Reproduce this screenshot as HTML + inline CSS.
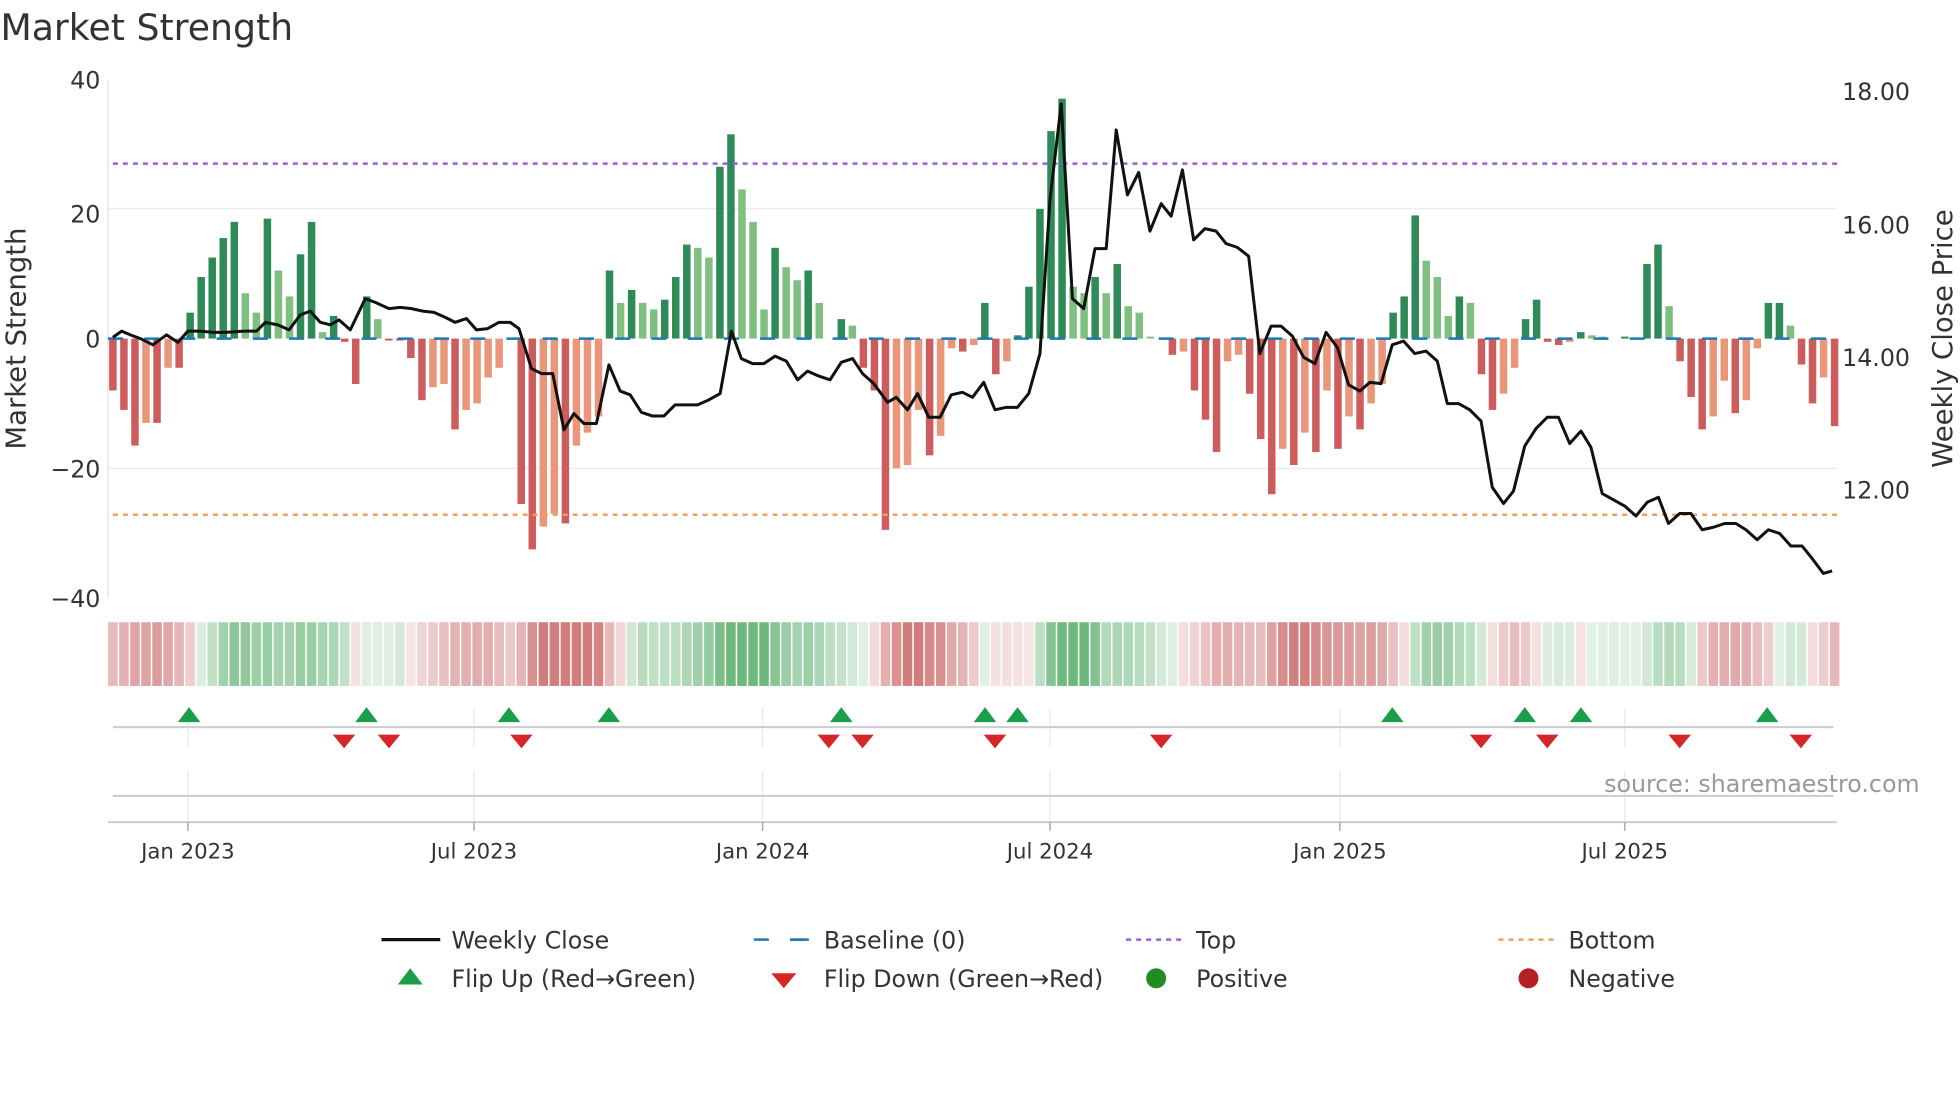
<!DOCTYPE html>
<html><head><meta charset="utf-8"><style>
html,body{margin:0;padding:0;background:#fff;}
svg{display:block;font-family:"DejaVu Sans","Liberation Sans",sans-serif;}
</style></head><body>
<svg id="s" width="1960" height="1102" viewBox="0 0 1568 882" xmlns="http://www.w3.org/2000/svg">
<rect width="1568" height="882" fill="#fff"/>
<text x="0" y="32" font-size="29" fill="#333">Market Strength</text>
<line x1="86" y1="167" x2="1470" y2="167" stroke="#ececec" stroke-width="1.2"/>
<line x1="86" y1="375" x2="1470" y2="375" stroke="#ececec" stroke-width="1.2"/>
<line x1="86" y1="64" x2="86" y2="479" stroke="#e6e6e6" stroke-width="1.2"/>
<g id="bars"></g>
<line x1="86" y1="271" x2="1470" y2="271" stroke="#1f77b4" stroke-width="2" stroke-dasharray="12 17"/>
<line x1="90" y1="131" x2="1470" y2="131" stroke="#9a5de0" stroke-width="2" stroke-dasharray="4 4"/>
<line x1="90" y1="412" x2="1470" y2="412" stroke="#f0a05a" stroke-width="2" stroke-dasharray="4 4"/>
<polyline id="price" fill="none" stroke="#111" stroke-width="2.4" stroke-linejoin="round"/>
<g font-size="19" fill="#333" text-anchor="end">
<text x="80" y="71">40</text><text x="80" y="178">20</text><text x="80" y="278">0</text>
<text x="80" y="382">−20</text><text x="80" y="486">−40</text></g>
<g font-size="19" fill="#333">
<text x="1474" y="80">18.00</text><text x="1474" y="187">16.00</text>
<text x="1474" y="293">14.00</text><text x="1474" y="399">12.00</text></g>
<text transform="translate(20,271) rotate(-90)" font-size="22" fill="#333" text-anchor="middle">Market Strength</text>
<text transform="translate(1562,271) rotate(-90)" font-size="22" fill="#333" text-anchor="middle">Weekly Close Price</text>
<g id="heat"></g>
<g stroke="#e8e8ee" stroke-width="1">
<line x1="150" y1="567" x2="150" y2="598"/><line x1="379" y1="567" x2="379" y2="598"/><line x1="610" y1="567" x2="610" y2="598"/><line x1="840" y1="567" x2="840" y2="598"/><line x1="1072" y1="567" x2="1072" y2="598"/><line x1="1300" y1="567" x2="1300" y2="598"/>
<line x1="150" y1="617" x2="150" y2="658"/><line x1="379" y1="617" x2="379" y2="658"/><line x1="610" y1="617" x2="610" y2="658"/><line x1="840" y1="617" x2="840" y2="658"/><line x1="1072" y1="617" x2="1072" y2="658"/><line x1="1300" y1="617" x2="1300" y2="658"/>
</g>
<line x1="90" y1="582" x2="1467" y2="582" stroke="#ccc" stroke-width="1.6"/>
<line x1="90" y1="637" x2="1467" y2="637" stroke="#ccc" stroke-width="1.6"/>
<line x1="86" y1="658" x2="1470" y2="658" stroke="#ccc" stroke-width="1.6"/>
<g id="flips"></g>
<g stroke="#aaa" stroke-width="1.2">
<line x1="150" y1="658" x2="150" y2="665"/><line x1="379" y1="658" x2="379" y2="665"/><line x1="610" y1="658" x2="610" y2="665"/><line x1="840" y1="658" x2="840" y2="665"/><line x1="1072" y1="658" x2="1072" y2="665"/><line x1="1300" y1="658" x2="1300" y2="665"/></g>
<g font-size="17" fill="#333" text-anchor="middle">
<text x="150" y="687">Jan 2023</text><text x="379" y="687">Jul 2023</text><text x="610" y="687">Jan 2024</text>
<text x="840" y="687">Jul 2024</text><text x="1072" y="687">Jan 2025</text><text x="1300" y="687">Jul 2025</text></g>
<text x="1536" y="634" font-size="19" fill="#999" text-anchor="end">source: sharemaestro.com</text>
<g font-size="19" fill="#333">
<line x1="305" y1="752" x2="352" y2="752" stroke="#111" stroke-width="2.6"/>
<text x="361" y="759">Weekly Close</text>
<line x1="603" y1="752" x2="647" y2="752" stroke="#1f77b4" stroke-width="2" stroke-dasharray="12 17"/>
<line x1="632" y1="752" x2="647" y2="752" stroke="#1f77b4" stroke-width="2"/>
<text x="659" y="759">Baseline (0)</text>
<line x1="901" y1="752" x2="945" y2="752" stroke="#9a5de0" stroke-width="2" stroke-dasharray="4 4"/>
<text x="957" y="759">Top</text>
<line x1="1199" y1="752" x2="1243" y2="752" stroke="#f0a05a" stroke-width="2" stroke-dasharray="4 4"/>
<text x="1255" y="759">Bottom</text>
<polygon points="318,788 338,788 328,775" fill="#1a9e4a"/>
<text x="361" y="790">Flip Up (Red→Green)</text>
<polygon points="617,779 637,779 627,791" fill="#d62728"/>
<text x="659" y="790">Flip Down (Green→Red)</text>
<circle cx="925" cy="783" r="8" fill="#228b22"/>
<text x="957" y="790">Positive</text>
<circle cx="1223" cy="783" r="8" fill="#b22222"/>
<text x="1255" y="790">Negative</text>
</g>
</svg>
<script>
var NS="http://www.w3.org/2000/svg";
var V=[-8,-11,-16.5,-13,-13,-4.5,-4.5,4,9.5,12.5,15.5,18,7,4,18.5,10.5,6.5,13,18,1,3.5,-0.5,-7,6.5,3,-0.3,-0.3,-3,-9.5,-7.5,-7,-14,-11,-10,-6,-4.5,0,-25.5,-32.5,-29,-27,-28.5,-16.5,-14.5,-12,10.5,5.5,7.5,5.5,4.5,6,9.5,14.5,14,12.5,26.5,31.5,23,18,4.5,14,11,9,10.5,5.5,0,3,2,-4.5,-8,-29.5,-20,-19.5,-11,-18,-15,-1.5,-2,-1,5.5,-5.5,-3.5,0.5,8,20,32,37,8,7,9.5,7,11.5,5,4,0.3,0,-2.5,-2,-8,-12.5,-17.5,-3.5,-2.5,-8.5,-15.5,-24,-17,-19.5,-14.5,-17.5,-8,-17,-12,-14,-10,-7,4,6.5,19,12,9.5,3.5,6.5,5.5,-5.5,-11,-8.5,-4.5,3,6,-0.5,-1,-0.5,1,0.5,0.3,0,0.3,0,11.5,14.5,5,-3.5,-9,-14,-12,-6.5,-11.5,-9.5,-1.5,5.5,5.5,2,-4,-10,-6,-13.5];
var n=V.length, x0=90, dx=(1468-90)/(n-1);
var bars=document.getElementById('bars'), heat=document.getElementById('heat');
function el(t,a,p){var e=document.createElementNS(NS,t);for(var k in a)e.setAttribute(k,a[k]);p.appendChild(e);return e;}
for(var i=0;i<n;i++){
 var v=V[i],x=x0+i*dx,y0=271,y1=271-v*5.19;
 var prev=i>0?V[i-1]:0; var dark = v>0? (v>=prev): (v<=prev);
 var c=v>=0?(dark?'#2e8b57':'#7fbf7f'):(dark?'#cd5c5c':'#e9967a');
 if(Math.abs(v)>0.05) el('rect',{x:x-3,y:Math.min(y0,y1),width:6,height:Math.max(1,Math.abs(y1-y0)),fill:c},bars);
 var s=0,c2=0;for(var j=Math.max(0,i-3);j<=i;j++){s+=V[j];c2++;} s/=c2;
 var a=Math.min(1,0.2+Math.abs(s)/24);
 var hc=s>=0?'rgba(60,160,80,'+(a*0.75)+')':'rgba(190,70,70,'+(a*0.7)+')';
 el('rect',{x:x-dx/2+0.6,y:498,width:dx-1.2,height:51,fill:hc},heat);
}
var P=[[90,270],[97,265],[104,268],[112,271],[122,276],[133,268],[142,274],[150,265],[160,265],[170,266],[180,266],[195,265],[205,265],[212,258],[222,260],[231,264],[240,252],[248,249],[256,258],[264,260],[271,256],[280,264],[292,239],[300,242],[311,247],[320,246],[329,247],[338,249],[347,250],[356,254],[364,258],[373,255],[381,264],[390,263],[399,258],[408,258],[415,263],[425,295],[433,299],[442,299],[451,344],[459,331],[467,339],[477,339],[487,292],[496,313],[504,316],[513,330],[522,333],[531,333],[540,324],[549,324],[558,324],[567,320],[576,315],[585,265],[593,287],[602,291],[611,291],[620,285],[629,289],[638,304],[646,297],[655,301],[664,304],[673,290],[682,287],[690,299],[699,307],[710,322],[717,318],[726,328],[734,315],[743,334],[752,334],[761,316],[770,314],[778,318],[787,306],[796,328],[805,326],[814,326],[823,315],[832,283],[840,160],[849,83],[858,239],[867,247],[876,199],[885,199],[893,104],[902,156],[911,138],[920,185],[929,163],[937,173],[946,136],[955,192],[964,183],[973,185],[981,195],[990,198],[999,205],[1008,283],[1017,261],[1025,261],[1034,269],[1043,286],[1052,291],[1061,266],[1070,278],[1079,308],[1088,313],[1096,306],[1105,307],[1114,276],[1123,273],[1132,283],[1141,281],[1150,289],[1158,323],[1167,323],[1176,328],[1185,337],[1194,390],[1203,403],[1211,393],[1220,357],[1229,343],[1238,334],[1247,334],[1256,355],[1265,345],[1273,358],[1282,395],[1291,400],[1300,405],[1309,413],[1318,402],[1327,398],[1335,419],[1344,411],[1353,411],[1362,424],[1371,422],[1380,419],[1389,419],[1397,424],[1406,432],[1415,424],[1424,427],[1433,437],[1442,437],[1450,447],[1459,459],[1466,457]];
document.getElementById('price').setAttribute('points',P.map(function(p){return p.join(',')}).join(' '));
var fl=document.getElementById('flips');
[151,293,407,487,673,788,814,1114,1220,1265,1414].forEach(function(x){el('polygon',{points:(x-9)+',578 '+(x+9)+',578 '+x+',566',fill:'#1a9e4a'},fl);});
[275,311,417,663,690,796,929,1185,1238,1344,1441].forEach(function(x){el('polygon',{points:(x-9)+',588 '+(x+9)+',588 '+x+',599',fill:'#d62728'},fl);});
</script>
</body></html>
